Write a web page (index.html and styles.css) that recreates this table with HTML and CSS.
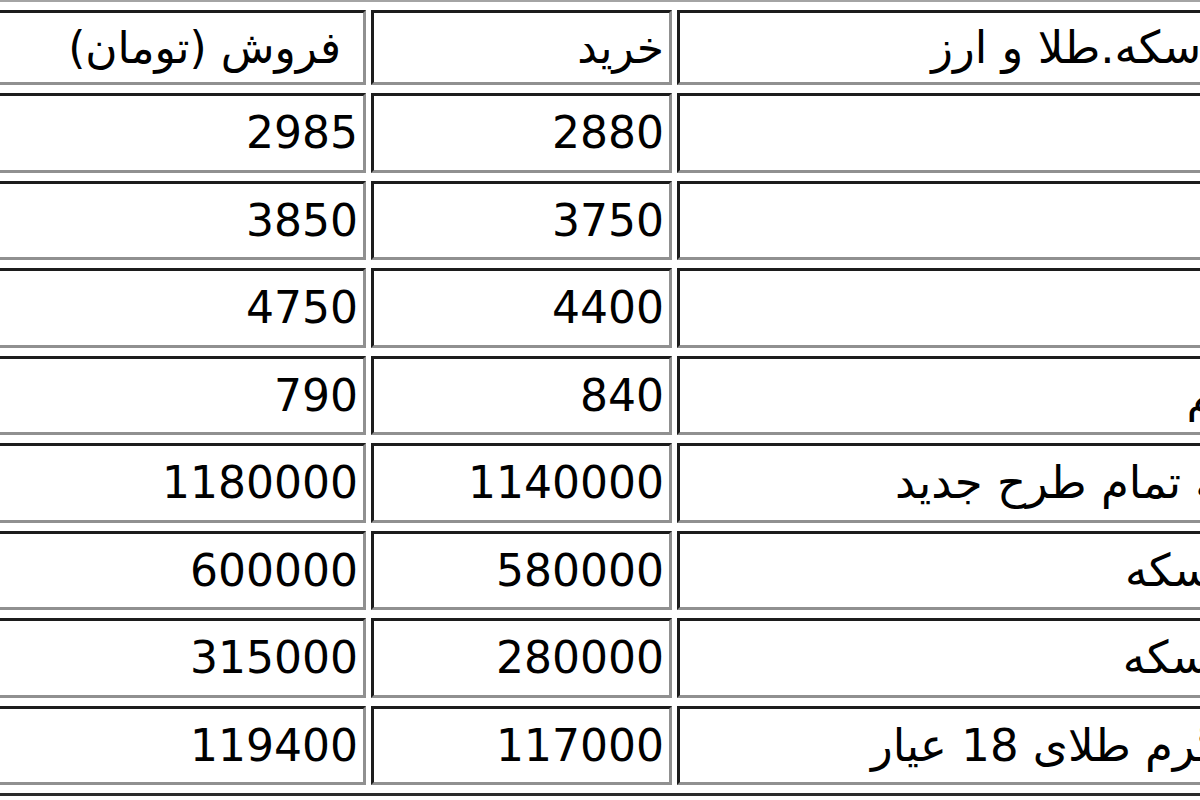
FILE: index.html
```html
<!DOCTYPE html>
<html lang="fa">
<head>
<meta charset="utf-8">
<title>نرخ سکه، طلا و ارز</title>
<link rel="stylesheet" href="styles.css">
</head>
<body>
<div class="viewport">
  <table class="rates" dir="rtl">
    <tr class="head">
      <td class="c-name">نرخ سکه.طلا و ارز</td>
      <td class="c-buy">خرید</td>
      <td class="c-sell">فروش (تومان)</td>
    </tr>
    <tr><td class="name">دلار</td><td>2880</td><td>2985</td></tr>
    <tr><td class="name">یورو</td><td>3750</td><td>3850</td></tr>
    <tr><td class="name">پوند</td><td>4400</td><td>4750</td></tr>
    <tr><td class="name">درهم</td><td>840</td><td>790</td></tr>
    <tr><td class="name">سکه تمام طرح جدید</td><td>1140000</td><td>1180000</td></tr>
    <tr><td class="name">نیم سکه</td><td>580000</td><td>600000</td></tr>
    <tr><td class="name">ربع سکه</td><td>280000</td><td>315000</td></tr>
    <tr><td class="name">هر گرم طلای 18 عیار</td><td>117000</td><td>119400</td></tr>
  </table>
</div>
</body>
</html>
```
FILE: styles.css
```css
html, body {
  margin: 0;
  padding: 0;
  background: #ffffff;
}

.viewport {
  width: 1200px;
  height: 800px;
  overflow: hidden;
}

.rates {
  direction: rtl;
  table-layout: fixed;
  border-collapse: separate;
  border-spacing: 5px 8px;
  width: 1353px;
  margin-left: -61px;
  border-style: solid;
  border-width: 2px 2px 3px 2px;
  border-color: #a4a4a4 #2a2a2a #2a2a2a #a4a4a4;
  font-family: "DejaVu Sans", "Noto Sans", sans-serif;
  font-size: 44px;
  color: #000000;
}

.rates td {
  box-sizing: border-box;
  height: 79.5px;
  padding: 0 5px;
  text-align: right;
  vertical-align: middle;
  white-space: nowrap;
  overflow: hidden;
  border-style: solid;
  border-width: 3px;
  border-color: #1c1c1c #909090 #909090 #1c1c1c;
}

.rates .head td {
  height: 75px;
}

.rates .c-name,
.rates .name {
  font-size: 45px;
}

.c-name { width: 613px; }
.c-buy { width: 301px; }
.c-sell {
  width: 420px;
}

.rates .head .c-sell {
  padding-right: 22px;
}
```
